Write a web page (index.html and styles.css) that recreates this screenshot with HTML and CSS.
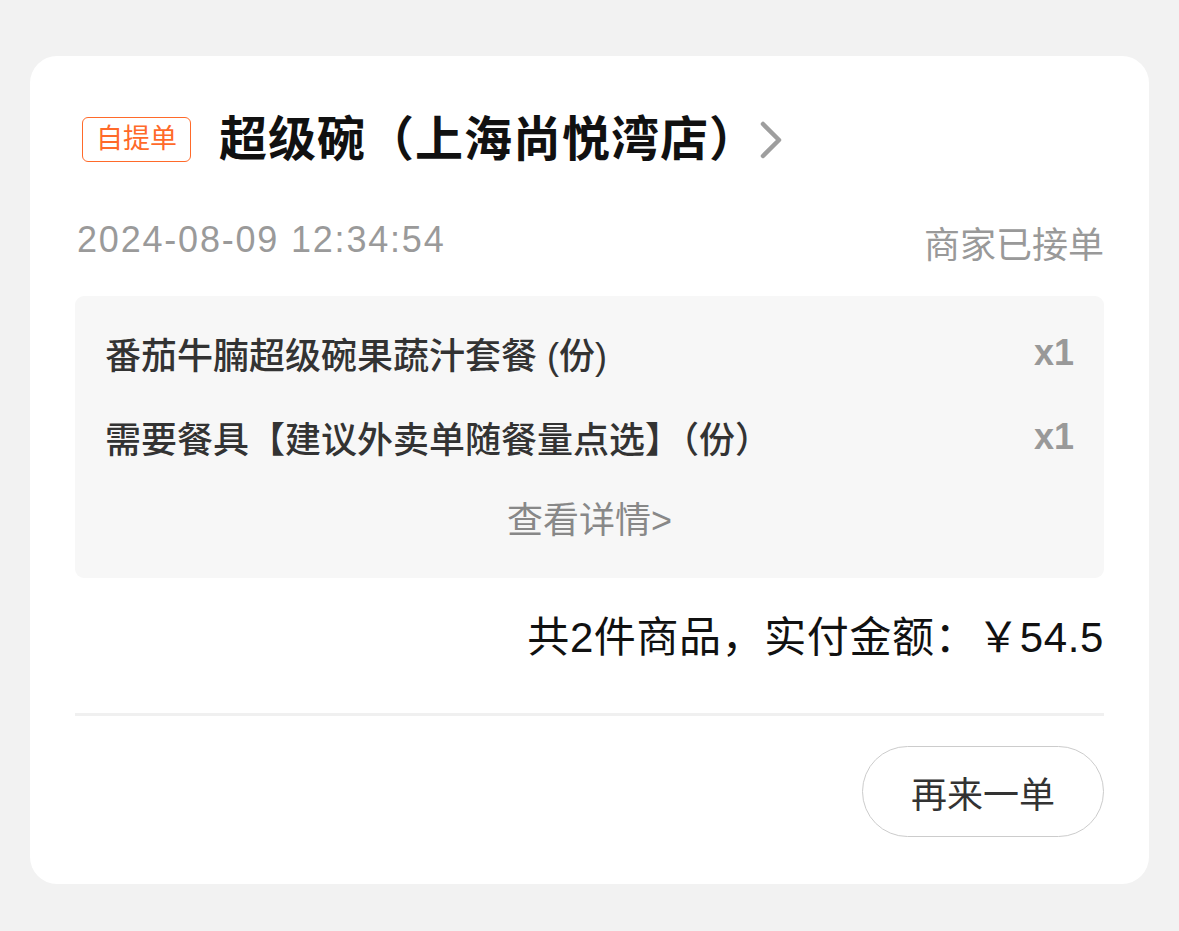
FILE: index.html
```html
<!DOCTYPE html>
<html lang="zh-CN">
<head>
  <meta charset="UTF-8" />
  <meta name="viewport" content="width=device-width, initial-scale=1.0"/>
  <title>订单</title>
  <link rel="stylesheet" href="styles.css">
</head>
<body>
  <div class="order-card">
    <div class="shop-row">
      <span class="tag">自提单</span>
      <span class="shop-name">超级碗（上海尚悦湾店）</span>
      <svg class="chevron" width="24" height="38" viewBox="0 0 24 38">
        <polyline points="4,3 20,19 4,35" fill="none" stroke="#9e9e9e" stroke-width="4.5" stroke-linecap="round" stroke-linejoin="round"/>
      </svg>
    </div>

    <div class="meta-row">
      <span class="order-time">2024-08-09 12:34:54</span>
      <span class="order-status">商家已接单</span>
    </div>

    <div class="goods-box">
      <div class="goods-item">
        <span class="goods-name">番茄牛腩超级碗果蔬汁套餐 (份)</span>
        <span class="goods-count">x1</span>
      </div>
      <div class="goods-item">
        <span class="goods-name">需要餐具【建议外卖单随餐量点选】（份）</span>
        <span class="goods-count">x1</span>
      </div>
      <div class="goods-more">查看详情&gt;</div>
    </div>

    <div class="total-row">共2件商品，实付金额：￥54.5</div>

    <div class="actions">
      <button class="btn-again">再来一单</button>
    </div>
  </div>
</body>
</html>
```

FILE: styles.css
```css
body {
  margin: 0;
  padding: 56px 30px 47px;
  background: #f2f2f2;
  font-family: "Liberation Sans", "Noto Sans CJK SC", sans-serif;
  color: #111;
}

.order-card {
  background: #fff;
  border-radius: 27px;
  padding: 61px 45px 47px;
}

.shop-row {
  display: flex;
  align-items: center;
  height: 45px;
}

.tag {
  box-sizing: border-box;
  height: 45px;
  padding: 0 13px;
  border: 1.5px solid #ff6a2a;
  border-radius: 6px;
  color: #ff6a2a;
  font-size: 27px;
  line-height: 42px;
  margin-left: 7px;
}

.shop-name {
  margin-left: 28px;
  font-size: 48px;
  font-weight: 700;
  color: #111;
  line-height: 45px;
  letter-spacing: 1px;
}

.chevron {
  margin-left: 1px;
}

.meta-row {
  display: flex;
  justify-content: space-between;
  align-items: flex-start;
  margin-top: 58px;
  height: 76px;
}

.order-time {
  font-size: 36px;
  letter-spacing: 1.8px;
  color: #9a9a9a;
  line-height: 40px;
  margin-left: 2px;
}

.order-status {
  font-size: 36px;
  color: #999;
  line-height: 40px;
  margin-top: 6px;
}

.goods-box {
  background: #f7f7f7;
  border-radius: 9px;
  padding: 15px 30px;
}

.goods-item {
  display: flex;
  justify-content: space-between;
  align-items: center;
  height: 84px;
  font-size: 36px;
  font-weight: 500;
}

.goods-name {
  color: #333;
}

.goods-count {
  color: #999;
  font-weight: 700;
}

.goods-more {
  height: 84px;
  line-height: 84px;
  text-align: center;
  font-size: 36px;
  color: #888;
}

.total-row {
  box-sizing: border-box;
  height: 138px;
  line-height: 120px;
  text-align: right;
  font-size: 42px;
  letter-spacing: 0.6px;
  color: #111;
  border-bottom: 3px solid #f0f0f0;
}

.actions {
  display: flex;
  justify-content: flex-end;
  padding-top: 30px;
}

.btn-again {
  width: 242px;
  height: 91px;
  border: 1.5px solid #ccc;
  border-radius: 46px;
  background: #fff;
  font-family: "Liberation Sans", "Noto Sans CJK SC", sans-serif;
  font-size: 36px;
  color: #333;
  padding: 0;
}
```
